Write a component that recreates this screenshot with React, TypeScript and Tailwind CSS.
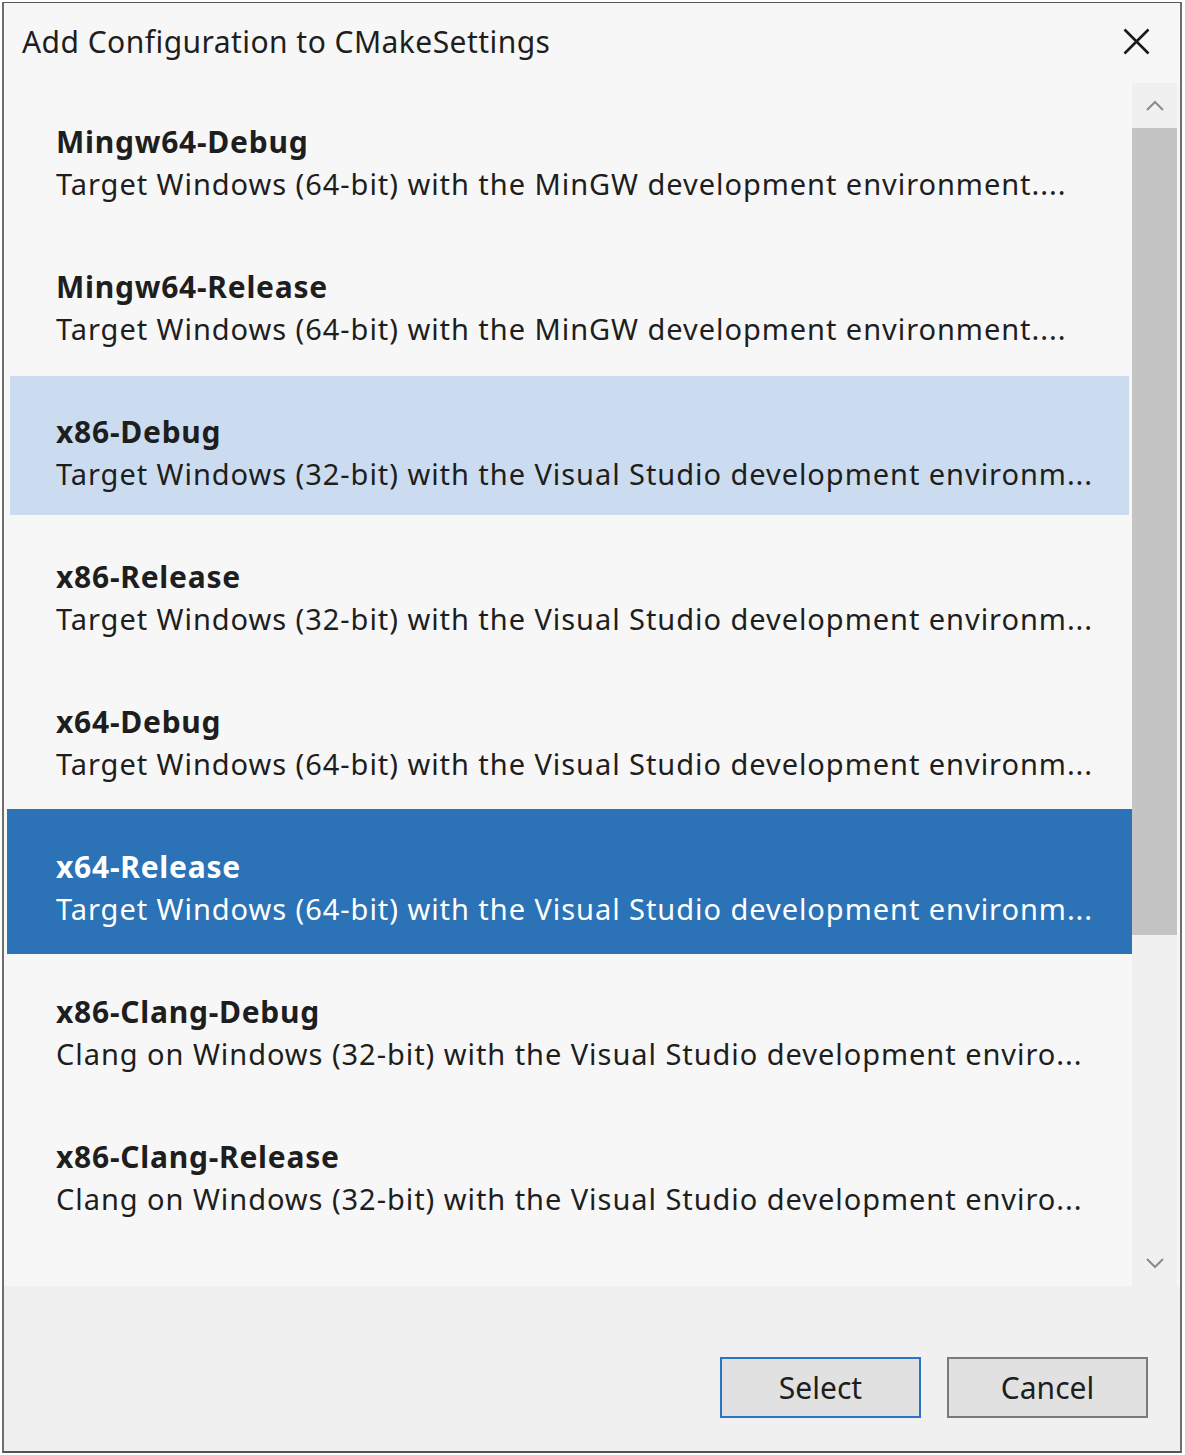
import React from "react";

const items = [
  { t: "Mingw64-Debug", d: "Target Windows (64-bit) with the MinGW development environment....", s: "" },
  { t: "Mingw64-Release", d: "Target Windows (64-bit) with the MinGW development environment....", s: "" },
  { t: "x86-Debug", d: "Target Windows (32-bit) with the Visual Studio development environm...", s: "light" },
  { t: "x86-Release", d: "Target Windows (32-bit) with the Visual Studio development environm...", s: "" },
  { t: "x64-Debug", d: "Target Windows (64-bit) with the Visual Studio development environm...", s: "" },
  { t: "x64-Release", d: "Target Windows (64-bit) with the Visual Studio development environm...", s: "dark" },
  { t: "x86-Clang-Debug", d: "Clang on Windows (32-bit) with the Visual Studio development enviro...", s: "" },
  { t: "x86-Clang-Release", d: "Clang on Windows (32-bit) with the Visual Studio development enviro...", s: "" },
];

function Item({ t, d, s }: { t: string; d: string; s: string }) {
  const outer =
    s === "dark"
      ? "h-[145px] bg-[#2b73b6] text-white pl-[49px] pt-[39px]"
      : s === "light"
      ? "h-[139px] bg-[#cbdcf1] text-[#1e1e1e] mt-[2px] mb-[4px] mx-[3px] pl-[46px] pt-[37px]"
      : "h-[145px] text-[#1e1e1e] pl-[49px] pt-[39px]";
  return (
    <div className={`${outer} whitespace-nowrap overflow-hidden`}>
      <div className="text-[30px] font-bold leading-[38px] tracking-[0.75px]">{t}</div>
      <div className="text-[29px] leading-[40px] mt-[3px] tracking-[0.95px]">{d}</div>
    </div>
  );
}

export default function App() {
  return (
    <div className="w-[1185px] h-[1455px] bg-white" style={{ fontFamily: '"Noto Sans", "Open Sans", sans-serif' }}>
      <div className="ml-[2px] mt-[2px] w-[1180px] h-[1451px] border-t border-t-[#555] border-x-2 border-x-[#6e6e6e] border-b-2 border-b-[#555] flex flex-col bg-[#f7f7f7]">
        <div className="h-[80px] flex items-center justify-between pl-[18px] pr-[30px] shrink-0">
          <div className="text-[30px] text-[#1e1e1e] leading-none pb-[2px] tracking-[0.45px]">Add Configuration to CMakeSettings</div>
          <svg width="27" height="27" viewBox="0 0 27 27" className="mb-[4px]">
            <path d="M1.5 1.5 L25.5 25.5 M25.5 1.5 L1.5 25.5" stroke="#1a1a1a" strokeWidth="2.6" />
          </svg>
        </div>
        <div className="flex-1 flex min-h-0">
          <div className="flex-1 pl-[3px] pt-[1px]">
            {items.map((it) => (
              <Item key={it.t} {...it} />
            ))}
          </div>
          <div className="w-[45px] bg-[#f0f0f0] flex flex-col mr-[3px]">
            <div className="h-[45px] flex items-center justify-center">
              <svg width="20" height="12" viewBox="0 0 20 12">
                <path d="M2 10 L10 2 L18 10" stroke="#8a8a8a" strokeWidth="2" fill="none" />
              </svg>
            </div>
            <div className="h-[807px] bg-[#c4c4c4]" />
            <div className="flex-1" />
            <div className="h-[46px] flex items-center justify-center">
              <svg width="20" height="12" viewBox="0 0 20 12">
                <path d="M2 2 L10 10 L18 2" stroke="#8a8a8a" strokeWidth="2" fill="none" />
              </svg>
            </div>
          </div>
        </div>
        <div className="h-[165px] bg-[#f0f0f0] shrink-0 flex justify-end items-start pt-[71px] pr-[32px] gap-[26px]">
          <button className="w-[201px] h-[61px] bg-[#e1e1e1] border-2 border-[#2a73c6] text-[30px] text-[#1e1e1e] flex items-center justify-center">
            Select
          </button>
          <button className="w-[201px] h-[61px] bg-[#e1e1e1] border-2 border-[#7a7a7a] text-[30px] text-[#1e1e1e] flex items-center justify-center">
            Cancel
          </button>
        </div>
      </div>
    </div>
  );
}
